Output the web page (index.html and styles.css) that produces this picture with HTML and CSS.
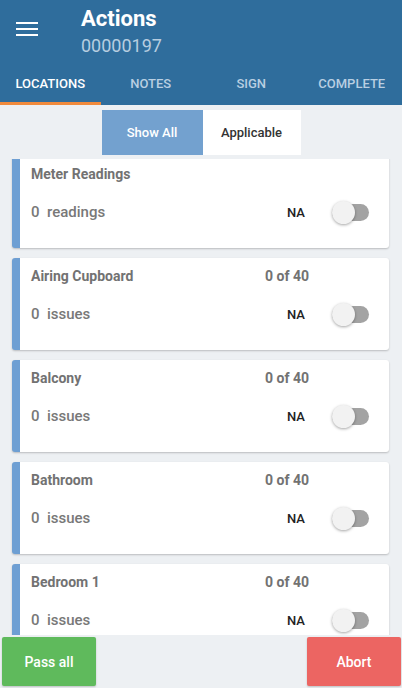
FILE: index.html
```
<!DOCTYPE html>
<html>
<head>
<meta charset="utf-8">
<link rel="stylesheet" href="styles.css">
</head>
<body>
<div class="app">
  <header class="header">
    <div class="topbar">
      <svg class="menu" width="22" height="14" viewBox="0 0 22 14"><rect x="0" y="0" width="22" height="2" fill="#fff"/><rect x="0" y="6" width="22" height="2" fill="#fff"/><rect x="0" y="12" width="22" height="2" fill="#fff"/></svg>
      <div class="titles">
        <div class="title">Actions</div>
        <div class="subtitle">00000197</div>
      </div>
    </div>
    <nav class="tabs">
      <div class="tab active">LOCATIONS</div>
      <div class="tab">NOTES</div>
      <div class="tab">SIGN</div>
      <div class="tab">COMPLETE</div>
    </nav>
  </header>
  <div class="filter">
    <div class="seg seg-on">Show All</div>
    <div class="seg seg-off">Applicable</div>
  </div>
  <div class="viewport">
    <div class="list">
      <div class="card">
        <div class="name">Meter Readings</div>
        <div class="count"></div>
        <div class="spacer"></div>
        <div class="stat">0&nbsp;&nbsp;readings</div>
        <div class="na">NA</div>
        <div class="switch"><span class="thumb"></span></div>
      </div>
      <div class="card">
        <div class="name">Airing Cupboard</div>
        <div class="count">0 of 40</div>
        <div class="spacer"></div>
        <div class="stat">0&nbsp;&nbsp;issues</div>
        <div class="na">NA</div>
        <div class="switch"><span class="thumb"></span></div>
      </div>
      <div class="card">
        <div class="name">Balcony</div>
        <div class="count">0 of 40</div>
        <div class="spacer"></div>
        <div class="stat">0&nbsp;&nbsp;issues</div>
        <div class="na">NA</div>
        <div class="switch"><span class="thumb"></span></div>
      </div>
      <div class="card">
        <div class="name">Bathroom</div>
        <div class="count">0 of 40</div>
        <div class="spacer"></div>
        <div class="stat">0&nbsp;&nbsp;issues</div>
        <div class="na">NA</div>
        <div class="switch"><span class="thumb"></span></div>
      </div>
      <div class="card">
        <div class="name">Bedroom 1</div>
        <div class="count">0 of 40</div>
        <div class="spacer"></div>
        <div class="stat">0&nbsp;&nbsp;issues</div>
        <div class="na">NA</div>
        <div class="switch"><span class="thumb"></span></div>
      </div>
    </div>
  </div>
  <footer class="footer">
    <div class="btn btn-pass">Pass all</div>
    <div class="btn btn-abort">Abort</div>
  </footer>
</div>
</body>
</html>
```
FILE: styles.css
```
* { box-sizing: border-box; }
html, body { margin: 0; padding: 0; }
body {
  font-family: Roboto, "Noto Sans", "Liberation Sans", sans-serif;
  background: #edf0f3;
}
.app {
  height: 688px;
  display: flex;
  flex-direction: column;
  overflow: hidden;
}
.header {
  background: #2f6d9c;
  color: #fff;
  flex: none;
}
.topbar {
  height: 64px;
  display: flex;
  align-items: flex-start;
  padding-left: 16px;
}
.menu { margin-top: 22px; flex: none; }
.titles {
  margin-left: 43px;
  padding-top: 6px;
}
.title {
  font-size: 22px;
  line-height: 26px;
  font-weight: 700;
}
.subtitle {
  margin-top: 3px;
  font-size: 18px;
  line-height: 22px;
  color: #b7cde0;
}
.tabs {
  display: flex;
  height: 41px;
}
.tab {
  flex: 1;
  display: flex;
  align-items: center;
  justify-content: center;
  padding-top: 1px;
  font-size: 13px;
  font-weight: 500;
  color: #b9cfe2;
  border-bottom: 3px solid transparent;
}
.tab.active {
  color: #fff;
  border-bottom-color: #f08a3c;
}
.filter {
  flex: none;
  display: flex;
  justify-content: center;
  padding: 5px 0 4px;
}
.seg {
  height: 45px;
  display: flex;
  align-items: center;
  justify-content: center;
  font-size: 13px;
  font-weight: 500;
}
.seg-on { width: 101px; background: #73a1cf; color: #fff; }
.seg-off { width: 98px; background: #fff; color: #333; }
.viewport {
  flex: 1;
  overflow: hidden;
}
.list {
  margin-top: -3px;
  display: flex;
  flex-direction: column;
  gap: 10px;
  padding: 0 13px 0 12px;
}
.card {
  flex: none;
  height: 92px;
  background: #fff;
  border-left: 8px solid #6e9fd3;
  border-radius: 3px;
  box-shadow: 0 1px 2px rgba(0, 0, 0, 0.22);
  display: grid;
  grid-template-columns: 1fr auto 37px;
  grid-template-rows: 20px 24px;
  column-gap: 23px;
  row-gap: 16px;
  align-items: center;
  padding: 8px 20px 0 11px;
}
.name, .count {
  font-size: 14px;
  font-weight: 700;
  color: #727272;
}
.count { justify-self: end; }
.stat {
  font-size: 15px;
  font-weight: 500;
  color: #787878;
}
.na {
  justify-self: end;
  margin-right: 4px;
  font-size: 13px;
  font-weight: 500;
  color: #222;
}
.switch {
  position: relative;
  width: 37px;
  height: 17px;
  border-radius: 9px;
  background: #a3a3a3;
}
.thumb {
  position: absolute;
  left: 0;
  top: -3px;
  width: 23px;
  height: 23px;
  border-radius: 50%;
  background: #f2f2f2;
  box-shadow: 0 1px 3px rgba(0, 0, 0, 0.35);
}
.footer {
  flex: none;
  display: flex;
  justify-content: space-between;
  padding: 2px 1px 2px 2px;
}
.btn {
  width: 94px;
  height: 49px;
  display: flex;
  align-items: center;
  justify-content: center;
  color: #fff;
  font-size: 14px;
  font-weight: 500;
  border-radius: 2px;
  box-shadow: 0 1px 2px rgba(0, 0, 0, 0.2);
}
.btn-pass { background: #5fba5c; }
.btn-abort { background: #ec6562; }
```
